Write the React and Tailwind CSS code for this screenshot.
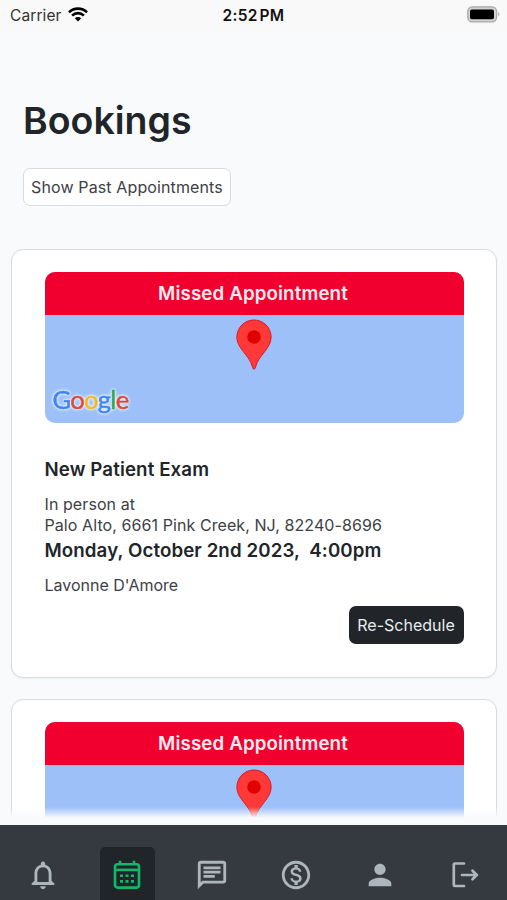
import React from 'react';
import { MdNotificationsNone, MdOutlineChat, MdOutlineMonetizationOn, MdPerson } from 'react-icons/md';

const appointments = [
  {
    id: 1,
    title: 'New Patient Exam',
    address: 'Palo Alto, 6661 Pink Creek, NJ, 82240-8696',
    date: 'Monday, October 2nd 2023,',
    time: '4:00pm',
    doctor: "Lavonne D'Amore",
  },
  {
    id: 2,
  },
];

function StatusBar() {
  return (
    <header className="grid h-8 shrink-0 grid-cols-3 items-center bg-[#f9f9f9] pr-[7px] pl-[10px] text-[15.5px] text-[#111]">
      <div className="-mt-px flex items-center gap-[6px] text-[#333]">
        <span className="tracking-[0.1px]">Carrier</span>
        <svg className="-mt-0.5" width="20" height="15" viewBox="0 0 20 15" fill="none" stroke="#000" strokeWidth="2.6">
          <path d="M1 5.3a12.8 12.8 0 0 1 18 0" />
          <path d="M4.1 8.6a8.3 8.3 0 0 1 11.8 0" />
          <path d="M6.8 11.2a4.6 4.6 0 0 1 6.4 0L10 14.5z" fill="#000" stroke="none" />
        </svg>
      </div>
      <div className="-mt-px -ml-[3px] text-center font-semibold tracking-[0.35px] whitespace-nowrap">2:52&#8202;PM</div>
      <svg className="-mt-1 justify-self-end" width="33" height="17" viewBox="0 0 33 17">
        <rect x="0.8" y="0.8" width="28.8" height="15" rx="4.5" fill="#d2d2d2" stroke="#a8a8a8" strokeWidth="1.3" />
        <rect x="3" y="3.5" width="24" height="9.8" rx="1.8" fill="#000" />
        <path d="M31.3 6v4.4c1.6-.8 1.6-3.6 0-4.4z" fill="#a8a8a8" />
      </svg>
    </header>
  );
}

function MapPin() {
  return (
    <svg width="36" height="51" viewBox="0 0 36 51" className="mt-[3.5px]">
      <path
        d="M18 1C8.600 1 .9 8.600.9 18c0 5.500 2.500 9.400 6 14.100 4.600 5.900 8 9.600 9.700 16.300.3 1.100.6 1.600 1.400 1.600s1.100-.5 1.400-1.600c1.700-6.700 5.100-10.400 9.700-16.300 3.500-4.700 6-8.600 6-14.100C35.100 8.600 27.400 1 18 1z"
        fill="#ff3838"
        stroke="#d9182b"
        strokeWidth="1"
      />
      <circle cx="18" cy="18" r="6.800" fill="#e00000" />
    </svg>
  );
}

function GoogleMark() {
  return (
    <div className="absolute bottom-[8px] left-[8px] font-[Lato,sans-serif] text-[25.5px] leading-[32px] tracking-[-0.7px] drop-shadow-[0_0_1px_#e6f0ff] [-webkit-text-stroke:0.5px_currentColor]">
      <div className="drop-shadow-[0_0_1.5px_#e6f0ff]">
        <span className="text-[#4285f4]">G</span>
        <span className="text-[#dd4b3e]">o</span>
        <span className="text-[#f4b928]">o</span>
        <span className="text-[#4285f4]">g</span>
        <span className="text-[#34a853]">l</span>
        <span className="text-[#dd4b3e]">e</span>
      </div>
    </div>
  );
}

function AppointmentCard({ appointment }) {
  return (
    <article className="h-[429px] shrink-0 rounded-xl border-[1.5px] border-[#d8dbdf] bg-white pt-[22px] pr-[32.5px] pl-[32.5px] shadow-xs">
      <div className="relative h-[151px] overflow-hidden rounded-[10px] bg-[#9dc0f8]">
        <div className="flex h-[43px] items-center justify-center bg-[#f1002f] pt-px pr-[2px] text-[18.7px] font-semibold tracking-[0.15px] text-[#ffecef]">
          Missed Appointment
        </div>
        <div className="flex justify-center">
          <MapPin />
        </div>
        {appointment.title && <GoogleMark />}
      </div>
      {appointment.title && (
        <>
          <h2 className="mt-[34px] text-[18.7px] leading-[26px] font-semibold tracking-[0.12px]">{appointment.title}</h2>
          <div className="mt-[11px] text-base leading-[21.400px] tracking-[0.08px] text-[#3d4145]">
            <p>In person at</p>
            <p className="whitespace-nowrap">{appointment.address}</p>
          </div>
          <p className="text-[18.7px] leading-[28px] font-semibold tracking-[0.1px] whitespace-pre">
            {appointment.date}  {appointment.time}
          </p>
          <p className="mt-[8px] text-base leading-6 text-[#3d4145]">{appointment.doctor}</p>
          <div className="mt-[9px] -mr-px flex justify-end pr-px">
            <button className="h-[38px] w-[115px] rounded-[7px] bg-[#212529] text-base text-[#e9ecef]">Re-Schedule</button>
          </div>
        </>
      )}
    </article>
  );
}

function CalendarIcon() {
  return (
    <svg width="28" height="30" viewBox="0 0 28 30" fill="none" stroke="currentColor" strokeWidth="2.600">
      <rect x="2" y="4.200" width="24" height="23.400" rx="2.500" />
      <path d="M7 0.800v3.500M21 0.800v3.500" />
      <path d="M2 9.900h24" />
      <path d="M7 15.800h3M12.500 15.800h3M18 15.800h3M7 21.400h3M12.500 21.400h3M18 21.400h3" />
    </svg>
  );
}

function LogoutIcon() {
  return (
    <svg width="28" height="28" viewBox="0 0 28 28" fill="none" stroke="currentColor" strokeWidth="2.700" strokeLinecap="round" strokeLinejoin="round">
      <path d="M13 2.500H3.800q-1 0-1 1v20.500q0 1 1 1H13" />
      <path d="M11 14h15M21.500 9.700l4.300 4.300-4.300 4.300" />
    </svg>
  );
}

const tabs = [
  { name: 'Notifications', icon: <MdNotificationsNone size={34} /> },
  { name: 'Bookings', icon: <CalendarIcon />, active: true },
  { name: 'Messages', icon: <MdOutlineChat size={34} /> },
  { name: 'Payments', icon: <MdOutlineMonetizationOn size={34} /> },
  { name: 'Profile', icon: <MdPerson size={34} /> },
  { name: 'Logout', icon: <LogoutIcon /> },
];

function TabBar() {
  return (
    <nav className="grid h-[75px] shrink-0 grid-cols-6 items-end justify-items-center bg-[#353a40] pl-px text-[#adb5bd]">
      {tabs.map((tab) => (
        <button
          key={tab.name}
          aria-label={tab.name}
          className={`flex h-[53px] w-[55px] items-center justify-center rounded-t-[5px] pt-[2px] ${
            tab.active ? 'bg-[#212529] text-[#12b76a]' : ''
          }`}
        >
          {tab.icon}
        </button>
      ))}
    </nav>
  );
}

function App() {
  return (
    <div className="flex h-[900px] w-[507px] flex-col overflow-hidden bg-[#f8fafc] font-[Inter,sans-serif] text-[#212529]">
      <StatusBar />
      <main className="relative flex min-h-0 flex-1 flex-col overflow-hidden">
        <section className="shrink-0 px-[23px] pt-[65px]">
          <h1 className="text-[37.500px] leading-[48px] font-semibold">Bookings</h1>
          <button className="mt-[23px] h-[38px] w-[208px] rounded-[7px] border-[1.5px] border-[#d8dbdf] bg-white text-base tracking-[0.12px] whitespace-nowrap text-[#3d4145]">
            Show Past Appointments
          </button>
        </section>
        <section className="mt-[43px] flex flex-col gap-[21px] pr-[10px] pl-[11px]">
          {appointments.map((appointment) => (
            <AppointmentCard key={appointment.id} appointment={appointment} />
          ))}
        </section>
        {/* list fades out above the tab bar */}
        <div className="absolute inset-x-0 bottom-0 h-[18px] bg-linear-to-b from-[#f8fafc]/0 to-[#f8fafc] to-60%" />
      </main>
      <TabBar />
    </div>
  );
}

export default App;
